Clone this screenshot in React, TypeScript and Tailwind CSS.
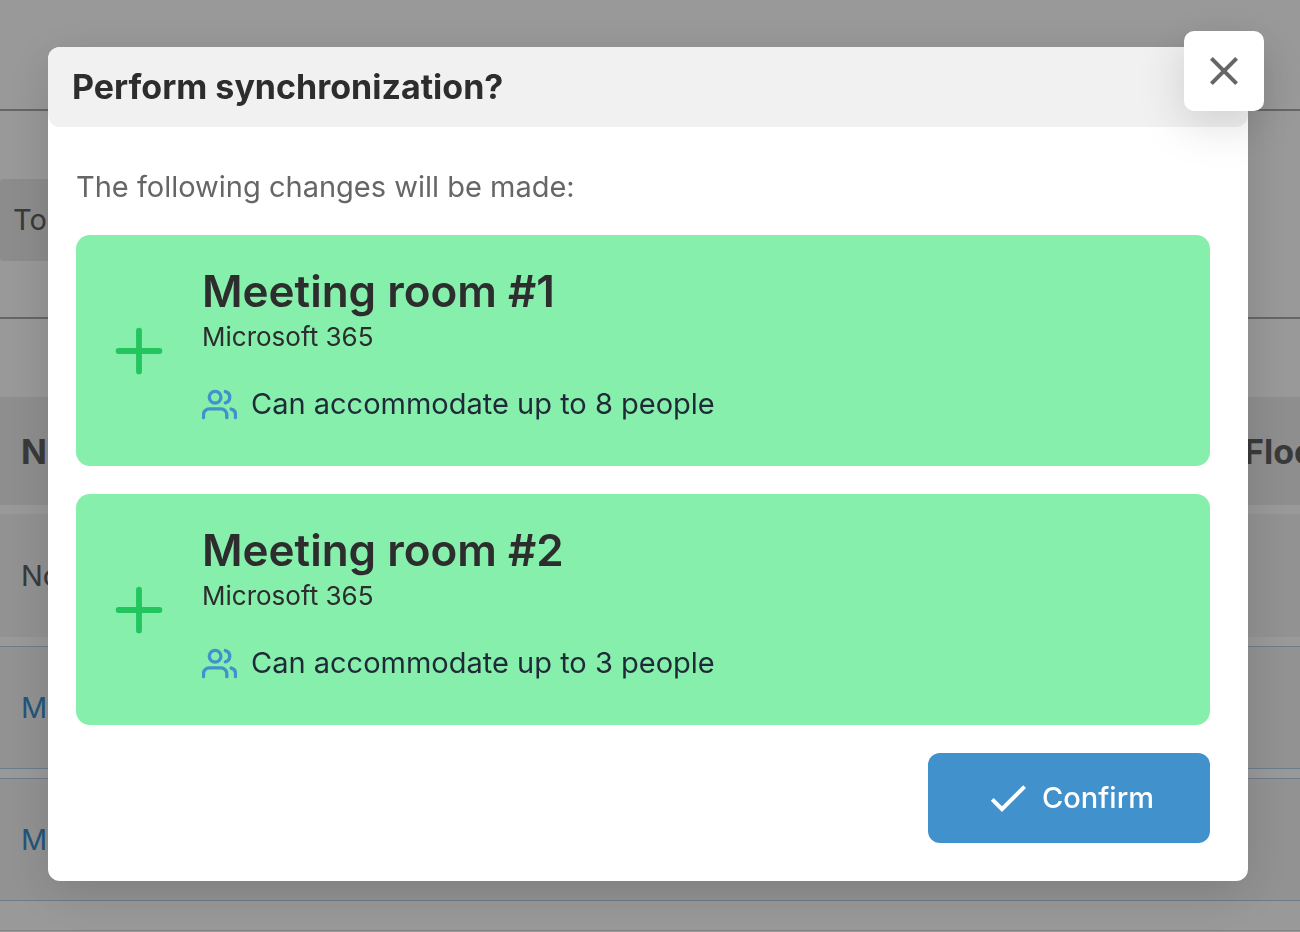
import { useState } from "react";
import { FiUsers } from "react-icons/fi";
import { MdCheck, MdClose } from "react-icons/md";
import { Plus } from "lucide-react";

type Room = {
  id: number;
  title: string;
  provider: string;
  capacity: number;
};

const rooms: Room[] = [
  { id: 1, title: "Meeting room #1", provider: "Microsoft 365", capacity: 8 },
  { id: 2, title: "Meeting room #2", provider: "Microsoft 365", capacity: 3 },
];

const RoomCard = ({ room }: { room: Room }) => {
  return (
    <li className="flex items-center gap-7 rounded-[14px] bg-[#86efac] p-7">
      <Plus size={70} className="shrink-0 text-[#22c55e]" aria-hidden="true" />
      <div className="min-w-0 flex-1 self-start pb-[13px]">
        <h3 className="text-[44px] leading-[56px] font-semibold text-[#2d2d2d]">{room.title}</h3>
        <p className="text-[26px] leading-9 text-[#2d2d2d]">{room.provider}</p>
        <div className="mt-7 flex items-center gap-[14px]">
          <FiUsers size={35} strokeWidth={2.3} className="shrink-0 text-[#4191cd]" aria-hidden="true" />
          <span className="text-[29px] leading-[42px] text-[#1f2937]">
            Can accommodate up to {room.capacity} people
          </span>
        </div>
      </div>
    </li>
  );
};

// page behind the dialog
const RoomsPage = () => {
  return (
    <main className="min-h-screen bg-white text-[29px] text-[#606060]">
      <div className="h-[111px] border-b-2 border-[#aaaaaa]" />
      <div className="border-b-2 border-[#aaaaaa] pt-[68px] pb-14">
        <div className="w-1/2 rounded-sm bg-[#eaeaea] px-[13px] leading-[82px]">Tou</div>
      </div>
      <table className="mt-[69px] w-full table-fixed border-separate border-spacing-x-0 border-spacing-y-[9px] text-left">
        <thead>
          <tr className="h-[108px] bg-[#ededed] text-[34px]">
            <th className="px-[21px] font-bold">Na</th>
            <th className="w-[56px] font-bold">Floor</th>
          </tr>
        </thead>
        <tbody>
          <tr className="h-[123px] bg-[#f4f4f4]">
            <td className="px-[21px]">No</td>
            <td />
          </tr>
          {rooms.map((room) => (
            <tr key={room.id} className="h-[123px] bg-[#f4f4f4] text-[#3a8fd0]">
              <td className="border-y border-[#b4cfe4] px-[21px]">M</td>
              <td className="border-y border-[#b4cfe4]" />
            </tr>
          ))}
        </tbody>
      </table>
      <div className="mt-5 h-10 border-t border-[#dddddd]" />
    </main>
  );
};

const App = () => {
  const [open, setOpen] = useState(true);

  return (
    <div className="h-screen overflow-hidden font-['Inter',sans-serif]">
      <RoomsPage />

      {open && (
        <div className="fixed inset-0 bg-black/40 pt-[47px] pr-[52px] pl-12">
          <section
            role="dialog"
            aria-modal="true"
            aria-labelledby="sync-title"
            className="relative rounded-xl bg-white shadow-[0_12px_48px_rgba(0,0,0,0.15)]"
          >
            <header className="rounded-xl bg-[#f1f1f1] px-6">
              <h2 id="sync-title" className="text-[34px] leading-[80px] font-bold text-[#2d2d2d]">
                Perform synchronization?
              </h2>
            </header>
            <button
              type="button"
              aria-label="Close"
              onClick={() => setOpen(false)}
              className="absolute -top-4 -right-4 flex size-20 items-center justify-center rounded-[10px] bg-white text-[#666666] shadow-[0_12px_48px_rgba(0,0,0,0.15)]"
            >
              <MdClose size={48} />
            </button>

            <div className="flex flex-col gap-7 pt-10 pr-[38px] pb-[38px] pl-7">
              <p className="text-[29px] leading-10 text-[#666666]">The following changes will be made:</p>
              <ul className="flex flex-col gap-7">
                {rooms.map((room) => (
                  <RoomCard key={room.id} room={room} />
                ))}
              </ul>
              <button
                type="button"
                onClick={() => setOpen(false)}
                className="flex h-[90px] min-w-[282px] items-center justify-center gap-[10px] self-end rounded-xl bg-[#4191cd] px-14 text-[29px] font-medium text-white"
              >
                <MdCheck size={48} />
                Confirm
              </button>
            </div>
          </section>
        </div>
      )}
    </div>
  );
};

export default App;
